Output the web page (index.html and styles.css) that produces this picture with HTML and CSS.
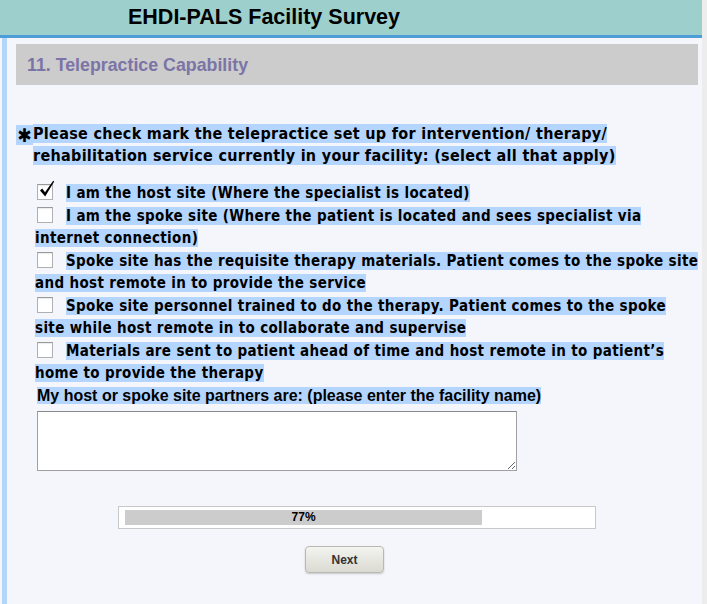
FILE: index.html
```html
<!DOCTYPE html>
<html lang="en">
<head>
    <meta charset="UTF-8">
    <meta name="viewport" content="width=device-width, initial-scale=1.0">
    <title>EHDI-PALS Facility Survey</title>
    <link rel="stylesheet" href="styles.css">
</head>
<body>
    <div class="window">
        <div class="main">
            <header class="topbar">
                <h1>EHDI-PALS Facility Survey</h1>
            </header>
            <div class="frame">
                <div class="rail"></div>
                <div class="content">
                    <h2 class="section-title">11. Telepractice Capability</h2>

                    <div class="question">
                        <span class="req">&#10033;</span>
                        <p><span class="sel">Please check mark the telepractice set up for intervention/ therapy/ rehabilitation service currently in your facility: (select all that apply)</span></p>
                    </div>

                    <ul class="options">
                        <li><span class="box checked"><svg width="16" height="18" viewBox="0 0 16 18"><path d="M1 10.5 L3.2 8.6 L6 12.2 L14.2 0.8 L15.2 1.6 L6.2 16.6 Z" fill="#000"/></svg></span><span class="sel">I am the host site (Where the specialist is located)</span></li>
                        <li><span class="box"></span><span class="sel">I am the spoke site (Where the patient is located and sees specialist via internet connection)</span></li>
                        <li><span class="box"></span><span class="sel">Spoke site has the requisite therapy materials. Patient comes to the spoke site and host remote in to provide the service</span></li>
                        <li><span class="box"></span><span class="sel">Spoke site personnel trained to do the therapy. Patient comes to the spoke site while host remote in to collaborate and supervise</span></li>
                        <li><span class="box"></span><span class="sel">Materials are sent to patient ahead of time and host remote in to patient’s home to provide the therapy</span></li>
                    </ul>

                    <label class="partners" for="partners"><span class="sel">My host or spoke site partners are: (please enter the facility name)</span></label>
                    <textarea id="partners" class="partners-input"></textarea>

                    <div class="progress">
                        <div class="progress-fill" style="width: 77%">77%</div>
                    </div>

                    <div class="actions">
                        <button class="next-btn">Next</button>
                    </div>
                </div>
            </div>
        </div>
        <div class="scrollbar"></div>
    </div>
</body>
</html>
```

FILE: styles.css
```css
body {
    margin: 0;
    background-color: #f5f6fb;
    font-family: "Liberation Sans", Arial, sans-serif;
    color: #000;
}

.window {
    display: flex;
    min-height: 604px;
}

.main {
    width: 702px;
}

.scrollbar {
    width: 5px;
    background-color: #ededed;
}

.topbar {
    height: 35px;
    background-color: #9dd0cd;
    border-bottom: 3px solid #4d9dd8;
    display: flex;
    align-items: center;
    padding-left: 128px;
}

.topbar h1 {
    margin: 0;
    font-size: 21.5px;
    font-weight: bold;
}

.frame {
    display: flex;
    min-height: 566px;
}

.rail {
    width: 5px;
    margin-left: 2px;
    background-color: #b3d5f7;
}

.content {
    flex: 1;
    padding: 6px 4px 0 9px;
}

.section-title {
    margin: 0;
    height: 41px;
    line-height: 42px;
    padding-left: 11px;
    background-color: #cccccc;
    color: #7b74a6;
    font-size: 17.8px;
    font-weight: bold;
}

.sel {
    background-color: #b4d5fe;
}

.question {
    display: flex;
    margin-top: 38px;
    font-family: "DejaVu Sans Condensed", "DejaVu Sans", sans-serif;
    font-weight: bold;
    font-size: 16px;
    letter-spacing: 0.3px;
    line-height: 22px;
}

.req {
    width: 17px;
    height: 20px;
    margin-top: 2px;
    background-color: #b4d5fe;
    font-size: 19px;
    line-height: 20px;
    text-align: center;
    letter-spacing: 0;
}

.question p {
    margin: 0;
    width: 640px;
}

.options {
    list-style: none;
    margin: 15px -1px 0 0;
    padding: 0 0 0 19px;
    font-family: "DejaVu Sans Condensed", "DejaVu Sans", sans-serif;
    font-weight: bold;
    font-size: 15px;
    letter-spacing: 0.35px;
    line-height: 22px;
}

.options li {
    margin-bottom: 1px;
}

.box {
    display: inline-block;
    position: relative;
    width: 14px;
    height: 14px;
    margin: 0 13px 0 2px;
    vertical-align: -2px;
    background-color: #fff;
    border: 1px solid #b0b0b0;
    border-top-color: #999;
    box-shadow: inset 0 1px 1px rgba(0,0,0,0.08);
}

.box svg {
    position: absolute;
    left: 1px;
    top: -5px;
}

.partners {
    display: block;
    margin-top: 2px;
    padding-left: 21px;
    font-size: 16px;
    font-weight: bold;
    line-height: 20px;
}

.partners-input {
    display: block;
    box-sizing: border-box;
    width: 480px;
    height: 60px;
    margin: 5px 0 0 21px;
    border: 1px solid #a0a0a0;
    border-top-color: #8a8a8a;
    background-color: #fff;
}

.progress {
    box-sizing: border-box;
    width: 478px;
    height: 23px;
    margin: 35px auto 0;
    padding: 3px 6px;
    background-color: #fff;
    border: 1px solid #c8c8c8;
}

.progress-fill {
    height: 15px;
    line-height: 15px;
    background-color: #cccccc;
    text-align: center;
    font-size: 12px;
    font-weight: bold;
}

.actions {
    display: flex;
    justify-content: center;
    padding-right: 25px;
    margin-top: 17px;
}

.next-btn {
    width: 79px;
    height: 27px;
    border: 1px solid #b9b9b1;
    border-radius: 4px;
    background: linear-gradient(#f4f4f0, #dadad2);
    box-shadow: 0 1px 2px rgba(0,0,0,0.2);
    font-family: "Liberation Sans", Arial, sans-serif;
    font-size: 12px;
    font-weight: bold;
    color: #333;
    cursor: pointer;
}
```
